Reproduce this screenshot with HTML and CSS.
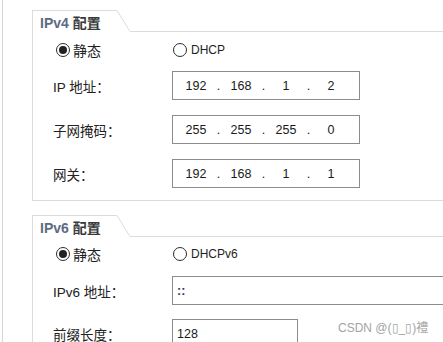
FILE: index.html
```html
<!DOCTYPE html>
<html lang="zh-CN">
<head>
<meta charset="utf-8">
<title>IP 配置</title>
<link rel="stylesheet" href="styles.css">
</head>
<body>
<div class="frame">
  <section class="group group--v4">
    <div class="tabbar">
      <div class="tab"><span class="tab-en">IPv4</span> 配置</div>
      <svg class="tab-slant" width="13" height="22" viewBox="0 0 13 22"><line x1="0" y1="0.5" x2="13" y2="21.5"/></svg>
      <div class="tab-rest"></div>
    </div>
    <div class="body body--v4">
      <div class="row row--radio">
        <label class="radio radio--first"><span class="radio-dot is-checked"></span><span class="radio-text">静态</span></label>
        <label class="radio radio--second"><span class="radio-dot"></span><span class="radio-text radio-text--en">DHCP</span></label>
      </div>
      <div class="row">
        <span class="label">IP 地址：</span>
        <div class="field field--ip"><span class="oct">192</span><span class="dot">.</span><span class="oct">168</span><span class="dot">.</span><span class="oct">1</span><span class="dot">.</span><span class="oct">2</span></div>
      </div>
      <div class="row">
        <span class="label">子网掩码：</span>
        <div class="field field--ip"><span class="oct">255</span><span class="dot">.</span><span class="oct">255</span><span class="dot">.</span><span class="oct">255</span><span class="dot">.</span><span class="oct">0</span></div>
      </div>
      <div class="row">
        <span class="label">网关：</span>
        <div class="field field--ip"><span class="oct">192</span><span class="dot">.</span><span class="oct">168</span><span class="dot">.</span><span class="oct">1</span><span class="dot">.</span><span class="oct">1</span></div>
      </div>
    </div>
  </section>

  <section class="group group--v6">
    <div class="tabbar">
      <div class="tab"><span class="tab-en">IPv6</span> 配置</div>
      <svg class="tab-slant" width="13" height="22" viewBox="0 0 13 22"><line x1="0" y1="0.5" x2="13" y2="21.5"/></svg>
      <div class="tab-rest"></div>
    </div>
    <div class="body body--v6">
      <div class="row row--radio">
        <label class="radio radio--first"><span class="radio-dot is-checked"></span><span class="radio-text">静态</span></label>
        <label class="radio radio--second"><span class="radio-dot"></span><span class="radio-text radio-text--en">DHCPv6</span></label>
      </div>
      <div class="row row--wide">
        <span class="label">IPv6 地址：</span>
        <div class="field field--v6">::</div>
      </div>
      <div class="row">
        <span class="label">前缀长度：</span>
        <div class="field field--prefix">128</div>
      </div>
    </div>
  </section>
</div>
<div class="watermark">CSDN @(▯_▯)禮</div>
</body>
</html>
```

FILE: styles.css
```css
html, body {
  margin: 0;
  padding: 0;
  background: #ffffff;
}
body {
  font-family: "Liberation Sans", "Noto Sans CJK SC", sans-serif;
  color: #222222;
  overflow: hidden;
  width: 443px;
  height: 342px;
  position: relative;
}
.frame {
  margin-left: 2px;
  border-left: 1px solid #d6d6d6;
  height: 342px;
  padding-top: 10px;
  box-sizing: border-box;
  overflow: hidden;
}
.group {
  margin-left: 29px;
  border-left: 1px solid #dcdcdc;
  overflow: hidden;
}
.group--v4 {
  border-bottom: 1px solid #dcdcdc;
}
.group--v6 {
  margin-top: 14px;
}
.tabbar {
  display: flex;
  height: 22px;
}
.tab {
  width: 84px;
  box-sizing: border-box;
  border-top: 1px solid #dcdcdc;
  padding: 4px 0 0 7px;
  font-family: "Liberation Sans", "Noto Sans CJK SC", sans-serif;
  font-weight: bold;
  font-size: 14px;
  line-height: 17px;
  color: #3a3a3a;
  white-space: nowrap;
}
.tab-en {
  color: #5d6c82;
}
.tab-slant {
  display: block;
  flex: none;
}
.tab-slant line {
  stroke: #dcdcdc;
  stroke-width: 1;
}
.tab-rest {
  flex: 1;
  border-bottom: 1px solid #dcdcdc;
}
.body {
  padding-left: 20px;
  display: flex;
  flex-direction: column;
  gap: 15px;
}
.body--v4 {
  padding-top: 7px;
  padding-bottom: 12px;
}
.body--v6 {
  padding-top: 6px;
  gap: 14px;
}
.row {
  display: grid;
  grid-template-columns: 119px auto;
  align-items: center;
}
.row--wide {
  grid-template-columns: 119px 1fr;
  margin-right: -4px;
}
.row--radio {
  height: 22px;
  margin-bottom: -5px;
}
.body--v6 .row--radio {
  margin-bottom: -3px;
}
.radio {
  display: inline-flex;
  align-items: center;
  gap: 3px;
}
.radio--first {
  padding-left: 3px;
}
.radio--second {
  margin-left: 1px;
}
.radio-dot {
  width: 14px;
  height: 14px;
  box-sizing: border-box;
  border: 1.3px solid #2e2e2e;
  border-radius: 50%;
  display: flex;
  align-items: center;
  justify-content: center;
  background: #ffffff;
}
.radio-dot.is-checked::after {
  content: "";
  width: 8px;
  height: 8px;
  border-radius: 50%;
  background: #222222;
}
.radio-text {
  font-family: "Noto Sans CJK SC", sans-serif;
  font-size: 14px;
  line-height: 22px;
  color: #1e1e1e;
}
.radio-text--en {
  font-family: "Liberation Sans", sans-serif;
  font-size: 12px;
  margin-left: 1px;
}
.label {
  font-family: "Liberation Sans", "Noto Sans CJK SC", sans-serif;
  font-size: 13.5px;
  color: #222222;
  white-space: nowrap;
}
.field {
  height: 29px;
  box-sizing: border-box;
  border: 1px solid #8c8c8c;
  display: flex;
  align-items: center;
  font-family: "Liberation Sans", sans-serif;
  font-size: 12.5px;
  color: #1a1a1a;
  background: #ffffff;
}
.field--ip {
  width: 188px;
  padding-left: 3px;
}
.oct {
  width: 40px;
  text-align: center;
}
.dot {
  width: 5px;
  text-align: center;
}
.field--v6 {
  padding-left: 4px;
  font-weight: bold;
  color: #333366;
}
.field--prefix {
  width: 126px;
  padding-left: 4px;
}
.watermark {
  position: absolute;
  left: 338px;
  top: 318px;
  font-family: "Liberation Sans", "Noto Sans CJK SC", sans-serif;
  font-size: 12px;
  color: #a3a3a3;
  white-space: nowrap;
}
```
